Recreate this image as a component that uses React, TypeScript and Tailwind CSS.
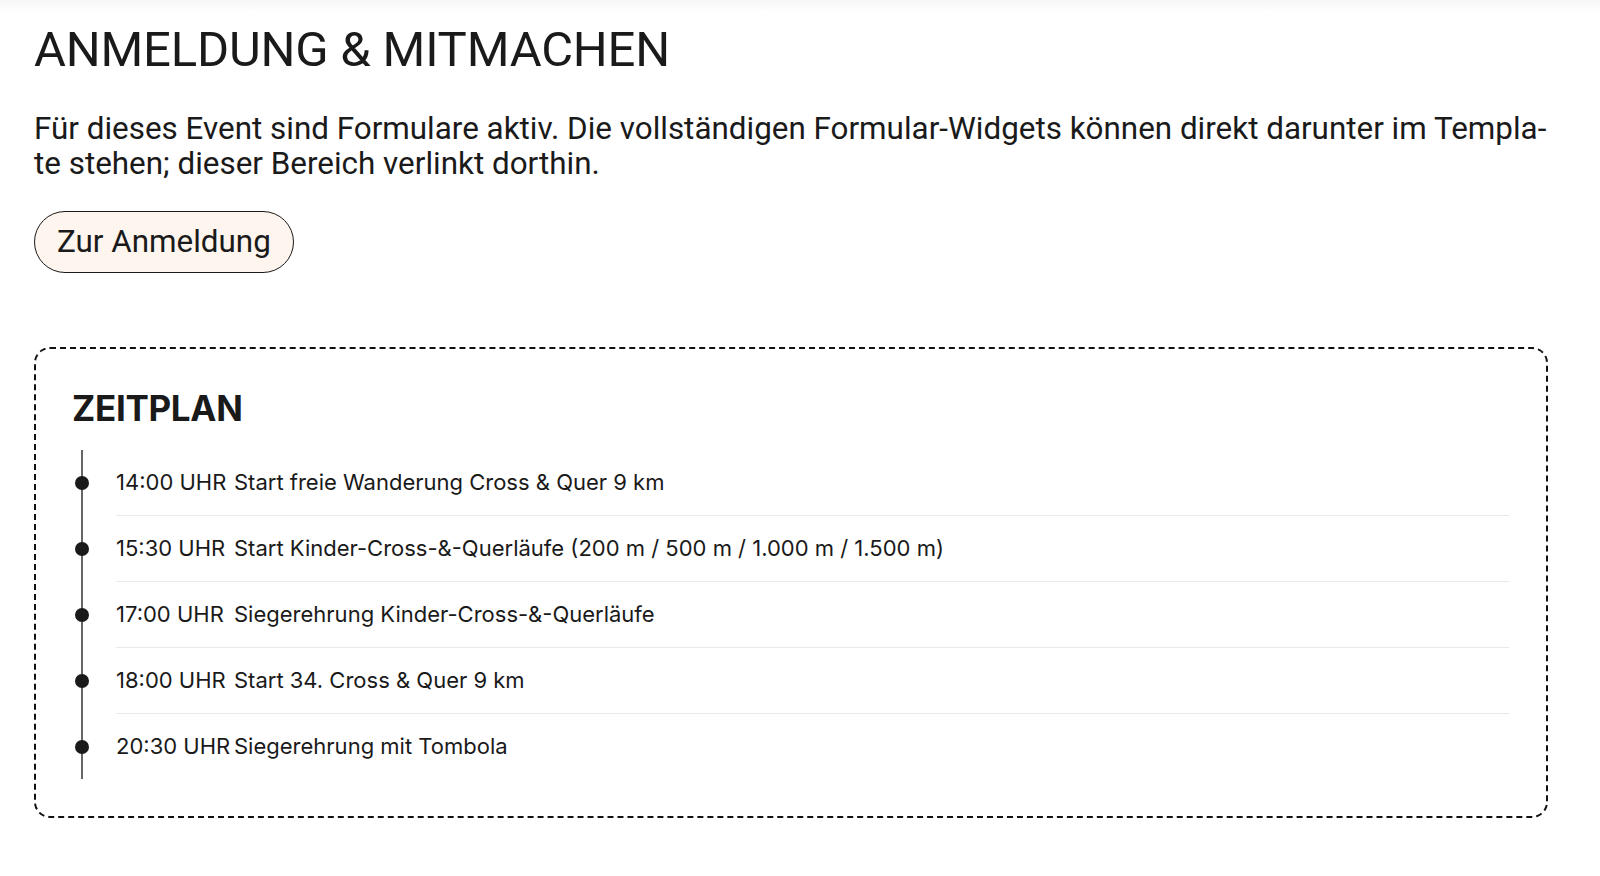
const schedule = [
  { time: "14:00 UHR", label: "Start freie Wanderung Cross & Quer 9 km" },
  {
    time: "15:30 UHR",
    label: "Start Kinder-Cross-&-Querläufe (200 m / 500 m / 1.000 m / 1.500 m)",
  },
  { time: "17:00 UHR", label: "Siegerehrung Kinder-Cross-&-Querläufe" },
  { time: "18:00 UHR", label: "Start 34. Cross & Quer 9 km" },
  { time: "20:30 UHR", label: "Siegerehrung mit Tombola" },
];

export default function App() {
  return (
    <div className="min-h-screen bg-white text-[#1a1a1a]">
      {/* shadow of the header above */}
      <div className="h-3 bg-gradient-to-b from-[#f6f6f6] to-white"></div>

      <div className="pl-[34px] pr-[52px]">
        <section lang="de" className="font-['Roboto',sans-serif]">
          <h2 className="mt-[8px] text-[49px] leading-[60px] font-normal tracking-[-0.2px]">
            ANMELDUNG &amp; MITMACHEN
          </h2>
          <p className="mt-[31px] text-[31.4px] leading-[35px]">
            Für dieses Event sind Formulare aktiv. Die vollständigen
            Formular-Widgets können direkt darunter im Templa-
            <br />
            te stehen; dieser Bereich verlinkt dorthin.
          </p>
          <a
            href="#anmeldung"
            className="mt-[30px] flex h-[62px] w-fit items-center rounded-full border border-[#1a1a1a] bg-[#fdf5ee] px-[22px] text-[31.4px]"
          >
            Zur Anmeldung
          </a>
        </section>

        <section className="mt-[74px] rounded-[16px] border-2 border-dashed border-[#111] pt-[37px] pr-[37px] pb-[37px] pl-[36px] font-['Inter',sans-serif]">
          <h3 className="text-[35px] leading-[44px] font-bold tracking-[-0.3px]">
            ZEITPLAN
          </h3>
          <ul className="relative mt-[20px] pl-[44px]">
            <span className="absolute top-0 bottom-0 left-[9px] w-[2px] bg-[#666]"></span>
            {schedule.map((item, i) => (
              <li
                key={item.time}
                className={`relative flex py-[19px] text-[22px] leading-[27px] ${
                  i < schedule.length - 1 ? "border-b border-[#e9e9e9]" : ""
                }`}
              >
                <span className="absolute top-1/2 left-[-41px] h-[14px] w-[14px] -translate-y-1/2 rounded-full bg-[#1a1a1a]"></span>
                <span className="min-w-[118px] whitespace-nowrap">
                  {item.time}
                </span>
                <span>{item.label}</span>
              </li>
            ))}
          </ul>
        </section>
      </div>
    </div>
  );
}
